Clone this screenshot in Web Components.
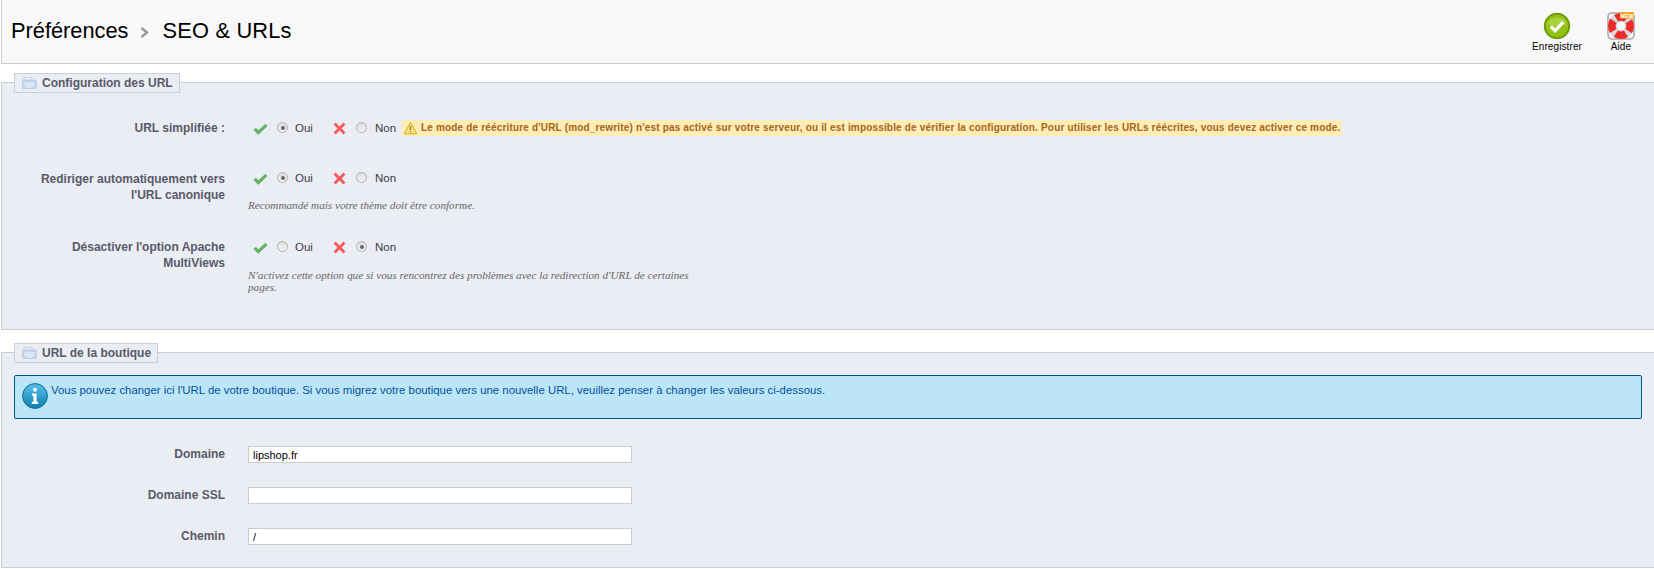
<!DOCTYPE html>
<html lang="fr">
<head>
<meta charset="utf-8">
<title>SEO & URLs</title>
<style>
	html, body { margin: 0; background: #fff; }
	body { font: 12px "Liberation Sans", Arial, sans-serif; color: #585a69; width: 1654px; height: 569px; overflow: hidden; }
</style>
</head>
<body>
<ps-header>
	<ps-toolbar-btn slot="actions" icon="save">Enregistrer</ps-toolbar-btn>
	<ps-toolbar-btn slot="actions" icon="help">Aide</ps-toolbar-btn>
</ps-header>

<ps-fieldset legend="Configuration des URL" style="--top:18px;--height:248px;--pad:36px">
	<ps-row label="URL simplifiée :" style="--row-h:52px;--lt:1px">
		<ps-switch on>
			<ps-warn>Le mode de réécriture d'URL (mod_rewrite) n'est pas activé sur votre serveur, ou il est impossible de vérifier la configuration. Pour utiliser les URLs réécrites, vous devez activer ce mode.</ps-warn>
		</ps-switch>
	</ps-row>
	<ps-row label="Rediriger automatiquement vers l'URL canonique" style="--row-h:68px">
		<ps-switch on style="--sw:-2px"></ps-switch>
		<ps-hint style="--hm:14px">Recommandé mais votre thème doit être conforme.</ps-hint>
	</ps-row>
	<ps-row label="Désactiver l'option Apache MultiViews">
		<ps-switch style="--sw:-1px"></ps-switch>
		<ps-hint>N'activez cette option que si vous rencontrez des problèmes avec la redirection d'URL de certaines pages.</ps-hint>
	</ps-row>
</ps-fieldset>

<ps-fieldset legend="URL de la boutique" style="--top:22px;--height:216px;--pad:22px">
	<ps-info>Vous pouvez changer ici l'URL de votre boutique. Si vous migrez votre boutique vers une nouvelle URL, veuillez penser à changer les valeurs ci-dessous.</ps-info>
	<ps-field label="Domaine" value="lipshop.fr" style="--mt:27px"></ps-field>
	<ps-field label="Domaine SSL" style="--mt:24px"></ps-field>
	<ps-field label="Chemin" value="/" style="--mt:24px"></ps-field>
</ps-fieldset>

<script>
const ICONS = {
	save: `<svg width="28" height="28" viewBox="0 0 28 28">
		<circle cx="14" cy="14" r="13.2" fill="#6f9a0a"/>
		<circle cx="14" cy="14" r="11.2" fill="#93c216"/>
		<path d="M4 12a10.5 9 0 0 1 20 0c-6 3-14 3-20 0z" fill="#a8d13a"/>
		<path d="M7.8 14.5l4.4 4.2 8-8.6" fill="none" stroke="#fff" stroke-width="3.4"/>
	</svg>`,
	help: `<svg width="28" height="28" viewBox="0 0 28 28">
		<rect x="1" y="1" width="26" height="26" rx="4" fill="none" stroke="#a8a8a8" stroke-width="1.6"/>
		<circle cx="14" cy="14" r="9" fill="none" stroke="#d8d8d8" stroke-width="8"/>
		<circle cx="14" cy="14" r="9" fill="none" stroke="#ee2a2a" stroke-width="8" stroke-dasharray="10.5 3.637" stroke-dashoffset="5.25"/>
		<circle cx="14" cy="14" r="5" fill="#f8f8f8" stroke="#b5b5b5" stroke-width=".8"/>
		<rect x="13" y="0" width="14" height="6.5" rx="1" fill="#f5a623"/>
		<text x="20" y="5.5" font-family="Liberation Sans" font-size="5.5" font-weight="700" fill="#fff" text-anchor="middle">NEW</text>
	</svg>`,
	legend: `<svg width="15" height="12" viewBox="0 0 15 12">
		<rect x="2" y="0.5" width="8" height="3" fill="#e9edf5" stroke="#bcc6d8" stroke-width=".6"/>
		<rect x="0.5" y="3" width="14" height="8.5" rx="1" fill="#c4d6ef" stroke="#a9bfde" stroke-width=".6"/>
		<path d="M2.5 6h10M2.5 8h10M4.5 10h6" stroke="#f2f6fb" stroke-width="1"/>
	</svg>`,
	check: `<svg width="15" height="12" viewBox="0 0 15 12"><path d="M.8 6.8l4.4 4.6L14.2 3 12.4 1.2 5.4 7.6 3 5.2z" fill="#62b562" stroke="#4f9f4f" stroke-width=".5"/></svg>`,
	cross: `<svg width="13" height="13" viewBox="0 0 13 13"><path d="M2.6.6L6.5 4.4 10.4.6l2 2-3.8 3.9 3.8 3.9-2 2-3.9-3.8-3.9 3.8-2-2 3.8-3.9L.6 2.6z" fill="#f55a5f"/></svg>`,
	warn: `<svg width="15" height="14" viewBox="0 0 15 14"><path d="M7.5 1.5L13.8 12.8H1.2z" fill="#fbe38a" stroke="#d9a520" stroke-width="1" stroke-linejoin="round"/><path d="M7.5 5v4" stroke="#a9781b" stroke-width="1.4"/><circle cx="7.5" cy="10.8" r=".8" fill="#a9781b"/></svg>`,
	info: `<svg width="26" height="26" viewBox="0 0 26 26">
		<defs><linearGradient id="g" x1="0" y1="0" x2="0" y2="1"><stop offset="0" stop-color="#5cc0e8"/><stop offset="1" stop-color="#0a7fb0"/></linearGradient></defs>
		<circle cx="13" cy="13" r="12.4" fill="url(#g)" stroke="#0d6c93" stroke-width="1"/>
		<circle cx="13" cy="6.8" r="2" fill="#fff"/>
		<path d="M10 10.5h4.6v8.3h1.6V21H9.8v-2.2h1.6v-6.1H10z" fill="#fff"/>
	</svg>`
};

class PsHeader extends HTMLElement {
	constructor() {
		super();
		this.attachShadow({ mode: 'open' });
		this.shadowRoot.innerHTML = `
			<style>
				:host { display: flex; box-sizing: border-box; height: 64px; align-items: flex-start; justify-content: space-between; background: #f8f8f8; border-left: 1px solid #ccc; border-bottom: 1px solid #ccc; margin-left: 1px; }
				h1 { margin: 18px 0 0 9px; font: 400 21.8px/26px "Liberation Sans", Arial, sans-serif; color: #000; display: flex; align-items: center; }
				svg { margin: 3px 14px 0 11px; }
				b { font-weight: 400; letter-spacing: .2px; }
				.actions { display: flex; gap: 25px; padding: 12px 19px 0 0; }
			</style>
			<h1>Préférences<svg width="9" height="11" viewBox="0 0 9 11"><path d="M1.5 1L7 5.5 1.5 10" fill="none" stroke="#9a9a9a" stroke-width="2.4"/></svg><b>SEO &amp; URLs</b></h1>
			<div class="actions"><slot name="actions"></slot></div>
		`;
	}
}
customElements.define('ps-header', PsHeader);

class PsToolbarBtn extends HTMLElement {
	constructor() {
		super();
		this.attachShadow({ mode: 'open' });
	}
	connectedCallback() {
		this.shadowRoot.innerHTML = `
			<style>
				:host { display: flex; flex-direction: column; align-items: center; font-size: 10px; line-height: 12px; color: #000; }
				.i { height: 28px; }
				svg { display: block; }
				span { margin-top: 1px; letter-spacing: .1px; }
			</style>
			<div class="i">${ICONS[this.getAttribute('icon')]}</div>
			<span><slot></slot></span>
		`;
	}
}
customElements.define('ps-toolbar-btn', PsToolbarBtn);

class PsFieldset extends HTMLElement {
	constructor() {
		super();
		this.attachShadow({ mode: 'open' });
	}
	connectedCallback() {
		this.shadowRoot.innerHTML = `
			<style>
				:host { display: block; box-sizing: border-box; position: relative; margin: var(--top) 0 0 1px; height: var(--height); padding: var(--pad) 12px 0 12px; background: #ebedf4; border: 1px solid #ccced7; border-width: 1px 0 1px 1px; }
				.legend { position: absolute; left: 12px; top: -10px; box-sizing: border-box; height: 20px; display: flex; align-items: center; gap: 5px; padding: 0 6px 0 7px; background: #ebedf4; border: 1px solid #ccced7; font-weight: 700; font-size: 12px; color: #585a69; }
				svg { display: block; }
			</style>
			<div class="legend">${ICONS.legend}<span>${this.getAttribute('legend')}</span></div>
			<slot></slot>
		`;
	}
}
customElements.define('ps-fieldset', PsFieldset);

class PsRow extends HTMLElement {
	constructor() {
		super();
		this.attachShadow({ mode: 'open' });
	}
	connectedCallback() {
		this.shadowRoot.innerHTML = `
			<style>
				:host { display: grid; grid-template-columns: 211px 1fr; column-gap: 23px; min-height: var(--row-h, 0); align-items: start; }
				label { font-weight: 700; text-align: right; line-height: 16px; color: #585a69; padding-top: var(--lt, 0); }
				.c { min-width: 0; }
			</style>
			<label>${this.getAttribute('label')}</label>
			<div class="c"><slot></slot></div>
		`;
	}
}
customElements.define('ps-row', PsRow);

class PsSwitch extends HTMLElement {
	constructor() {
		super();
		this.attachShadow({ mode: 'open' });
	}
	connectedCallback() {
		const on = this.hasAttribute('on');
		this.shadowRoot.innerHTML = `
			<style>
				:host { display: flex; align-items: center; height: 17px; margin-top: var(--sw, 0); font-size: 11.5px; color: #383a49; white-space: nowrap; }
				.ck { margin-left: 5px; width: 15px; display: flex; position: relative; top: 1px; }
				.x { margin-left: 18px; width: 13px; display: flex; position: relative; top: 1px; }
				.r { width: 9px; height: 9px; border-radius: 50%; border: 1px solid #b0b0b0; background: linear-gradient(#dcdcdc, #f4f4f4); display: flex; align-items: center; justify-content: center; margin: 0 7px 0 9px; }
				.r.s::after { content: ""; width: 4px; height: 4px; border-radius: 50%; background: #666; }
				.x + .r { margin: 0 8px 0 10px; }
				svg { display: block; }
				.t { width: 20px; }
			</style>
			<span class="ck">${ICONS.check}</span><span class="r ${on ? 's' : ''}"></span><span class="t">Oui</span>
			<span class="x">${ICONS.cross}</span><span class="r ${on ? '' : 's'}"></span><span class="t">Non</span>
			<slot></slot>
		`;
	}
}
customElements.define('ps-switch', PsSwitch);

class PsWarn extends HTMLElement {
	constructor() {
		super();
		this.attachShadow({ mode: 'open' });
		this.shadowRoot.innerHTML = `
			<style>
				:host { display: flex; align-items: center; gap: 3px; height: 16px; margin-left: 7px; padding: 0 2px 0 1px; background: #ffedb5; color: #a5651c; font-size: 10px; font-weight: 700; letter-spacing: .17px; white-space: nowrap; }
				svg { display: block; }
			</style>
			${ICONS.warn}<span><slot></slot></span>
		`;
	}
}
customElements.define('ps-warn', PsWarn);

class PsHint extends HTMLElement {
	constructor() {
		super();
		this.attachShadow({ mode: 'open' });
		this.shadowRoot.innerHTML = `
			<style>
				:host { display: block; width: 450px; margin-top: var(--hm, 15px); font: italic 11.2px/11.5px "Liberation Serif", serif; color: #666; }
			</style>
			<slot></slot>
		`;
	}
}
customElements.define('ps-hint', PsHint);

class PsInfo extends HTMLElement {
	constructor() {
		super();
		this.attachShadow({ mode: 'open' });
		this.shadowRoot.innerHTML = `
			<style>
				:host { display: flex; box-sizing: border-box; height: 44px; padding: 7px 0 0 7px; gap: 3px; background: #bde5f8; border: 1px solid #00529b; border-radius: 2px; color: #00529b; font-size: 11.4px; line-height: 14px; }
				svg { display: block; }
			</style>
			${ICONS.info}<span><slot></slot></span>
		`;
	}
}
customElements.define('ps-info', PsInfo);

class PsField extends HTMLElement {
	constructor() {
		super();
		this.attachShadow({ mode: 'open' });
	}
	connectedCallback() {
		this.shadowRoot.innerHTML = `
			<style>
				:host { display: grid; grid-template-columns: 211px 384px; column-gap: 23px; margin-top: var(--mt); }
				label { font-weight: 700; text-align: right; line-height: 17px; color: #585a69; }
				input { box-sizing: border-box; width: 384px; height: 17px; margin: 0; padding: 0 4px; border: 1px solid #ccc; background: #fff; font: 11px "Liberation Sans", Arial, sans-serif; color: #000; outline: none; }
			</style>
			<label>${this.getAttribute('label')}</label>
			<input type="text" value="${this.getAttribute('value') || ''}">
		`;
	}
}
customElements.define('ps-field', PsField);
</script>
</body>
</html>
